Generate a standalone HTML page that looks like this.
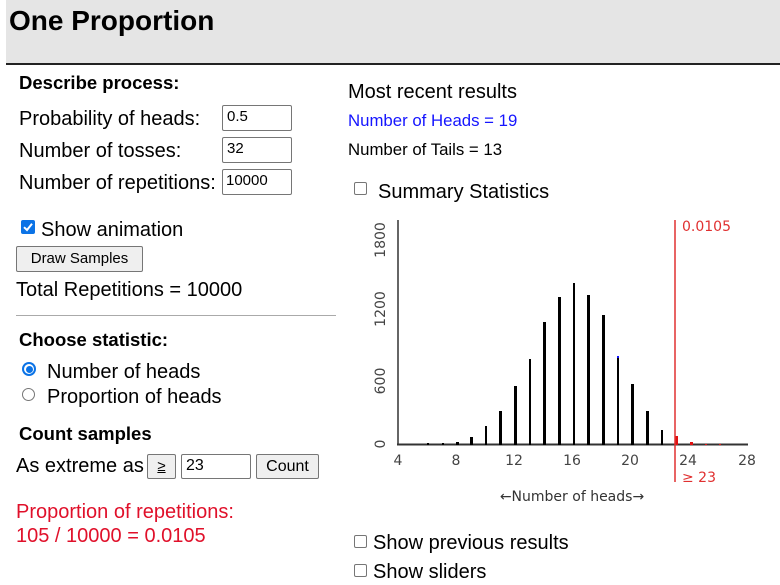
<!DOCTYPE html>
<html><head><meta charset="utf-8"><style>
body{margin:0;width:780px;height:585px;overflow:hidden;background:#fff;font-family:"Liberation Sans",Arial,sans-serif;color:#000;position:relative}
.a{position:absolute;white-space:nowrap}
.t{height:24px;line-height:24px;font-size:20px}
.b{font-weight:bold;font-size:18.5px;height:24px;line-height:24px}
.in{position:absolute;border:1px solid #767676;border-radius:2px;box-sizing:border-box;font-size:15px;line-height:22px;padding-left:4px;background:#fff}
.btn{position:absolute;border:1px solid #767676;border-radius:2px;box-sizing:border-box;background:#efefef;font-size:15px;text-align:center}
.cb{position:absolute;width:13px;height:13px;border:1px solid #767676;border-radius:2px;box-sizing:border-box;background:#fff}
.r{position:absolute;width:13px;height:13px;border:1px solid #767676;border-radius:50%;box-sizing:border-box;background:#fff}
</style></head><body>
<div class="a" style="left:6px;top:0;width:774px;height:63px;background:#e5e5e5;border-bottom:2px solid #222"></div>
<div class="a" style="left:9px;top:3px;font-size:28px;font-weight:bold;height:36px;line-height:36px">One Proportion</div>

<div class="a b" style="left:19px;top:71px">Describe process:</div>
<div class="a t" style="left:19px;top:107px">Probability of heads:</div>
<div class="in" style="left:222px;top:105px;width:70px;height:26px">0.5</div>
<div class="a t" style="left:19px;top:139px">Number of tosses:</div>
<div class="in" style="left:222px;top:137px;width:70px;height:26px">32</div>
<div class="a t" style="left:19px;top:171px">Number of repetitions:</div>
<div class="in" style="left:222px;top:169px;width:70px;height:26px;padding-left:3px">10000</div>

<div class="a" style="left:21px;top:220px;width:14px;height:14px;background:#0b73e6;border-radius:2px"><svg width="14" height="14" style="display:block"><path d="M3 7.2 L6 10 L11 3.8" stroke="#fff" stroke-width="2" fill="none"/></svg></div>
<div class="a t" style="left:41px;top:218px">Show animation</div>
<div class="btn" style="left:16px;top:246px;width:127px;height:26px;line-height:24px">Draw Samples</div>
<div class="a t" style="left:16px;top:278px">Total Repetitions = 10000</div>
<div class="a" style="left:16px;top:315px;width:320px;height:1px;background:#aaa"></div>

<div class="a b" style="left:19px;top:328px">Choose statistic:</div>
<div class="a" style="left:22px;top:362px;width:14px;height:14px;border-radius:50%;background:#0b73e6"><div style="position:absolute;left:2px;top:2px;width:10px;height:10px;border-radius:50%;background:#fff"></div><div style="position:absolute;left:3.5px;top:3.5px;width:7px;height:7px;border-radius:50%;background:#0b73e6"></div></div>
<div class="a t" style="left:47px;top:360px">Number of heads</div>
<div class="r" style="left:22px;top:388px"></div>
<div class="a t" style="left:47px;top:385px">Proportion of heads</div>
<div class="a b" style="left:19px;top:422px">Count samples</div>
<div class="a t" style="left:16px;top:454px">As extreme as</div>
<div class="btn" style="left:147px;top:454px;width:29px;height:25px;line-height:23px;text-decoration:underline">≥</div>
<div class="in" style="left:181px;top:454px;width:70px;height:25px;font-size:16px">23</div>
<div class="btn" style="left:256px;top:454px;width:63px;height:25px;line-height:23px;font-size:16px">Count</div>
<div class="a t" style="left:16px;top:500px;color:#e0102a">Proportion of repetitions:</div>
<div class="a t" style="left:16px;top:524px;color:#e0102a">105 / 10000 = 0.0105</div>

<div class="a t" style="left:348px;top:80px">Most recent results</div>
<div class="a" style="left:348px;top:111px;font-size:16.8px;line-height:20px;color:#1515ff">Number of Heads = 19</div>
<div class="a" style="left:348px;top:140px;font-size:16.8px;line-height:20px">Number of Tails = 13</div>
<div class="cb" style="left:354px;top:182px"></div>
<div class="a t" style="left:378px;top:180px">Summary Statistics</div>
<div class="cb" style="left:354px;top:535px"></div>
<div class="a t" style="left:373px;top:531px">Show previous results</div>
<div class="cb" style="left:354px;top:564px"></div>
<div class="a t" style="left:373px;top:560px">Show sliders</div>

<svg class="a" style="left:0;top:0" width="780" height="585">
<g font-family="DejaVu Sans, sans-serif" font-size="14" fill="#444">
<text transform="translate(385,444) rotate(-90)" text-anchor="middle" dy="0">0</text>
<text transform="translate(385,381) rotate(-90)" text-anchor="middle">600</text>
<text transform="translate(385,309) rotate(-90)" text-anchor="middle">1200</text>
<text transform="translate(385,240) rotate(-90)" text-anchor="middle">1800</text>
<g text-anchor="middle" fill="#444">
<text x="398" y="465">4</text><text x="456" y="465">8</text><text x="514" y="465">12</text><text x="572" y="465">16</text><text x="630" y="465">20</text><text x="688" y="465">24</text><text x="747" y="465">28</text>
</g>
<text x="572" y="501" text-anchor="middle" fill="#333">←Number of heads→</text>
</g>
<line x1="398" y1="220" x2="398" y2="445" stroke="#666" stroke-width="2"/>
<line x1="397" y1="444.5" x2="748" y2="444.5" stroke="#333" stroke-width="2"/>
<g fill="#000">
<rect x="427" y="443" width="2" height="2"/><rect x="442" y="443" width="2" height="2"/><rect x="456" y="442" width="3" height="3"/>
<rect x="470" y="437" width="3" height="8"/><rect x="485" y="426" width="2" height="19"/><rect x="499" y="411" width="3" height="34"/>
<rect x="514" y="386" width="3" height="59"/><rect x="529" y="359" width="2" height="86"/><rect x="543" y="322" width="3" height="123"/>
<rect x="558" y="297" width="3" height="148"/><rect x="573" y="283" width="2" height="162"/><rect x="587" y="295" width="3" height="150"/>
<rect x="602" y="315" width="3" height="130"/><rect x="617" y="357" width="2" height="88"/><rect x="631" y="384" width="3" height="61"/>
<rect x="646" y="411" width="3" height="34"/><rect x="661" y="430" width="2" height="15"/>
</g>
<rect x="617" y="356" width="2" height="2" fill="#1515ff"/>
<g fill="#e01010"><rect x="675" y="436" width="3" height="9"/><rect x="690" y="442" width="3" height="3"/><rect x="705" y="444" width="2" height="1"/><rect x="719" y="444" width="2" height="1"/></g>
<line x1="675" y1="220" x2="675" y2="482" stroke="#e03030" stroke-width="1.5"/>
<g font-family="DejaVu Sans, sans-serif" font-size="14" fill="#e03030">
<text x="682" y="231">0.0105</text><text x="682" y="482">≥ 23</text></g>
</svg>
</body></html>
